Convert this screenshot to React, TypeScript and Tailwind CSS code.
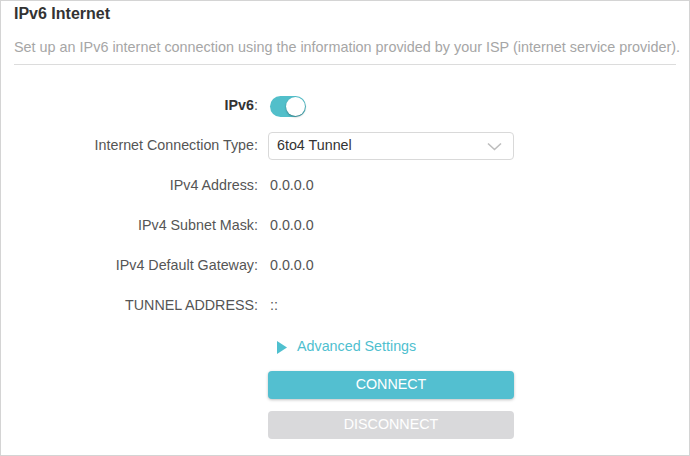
export default function App() {
  const rows = [
    { label: "IPv4 Address", value: "0.0.0.0" },
    { label: "IPv4 Subnet Mask", value: "0.0.0.0" },
    { label: "IPv4 Default Gateway", value: "0.0.0.0" },
    { label: "TUNNEL ADDRESS", value: "::" },
  ];

  return (
    <div
      className="w-[690px] h-[456px] bg-white border border-[#d4d4d4] text-[14.3px] text-[#555]"
      style={{ fontFamily: '"Liberation Sans", Arial, sans-serif' }}
    >
      <div className="mx-[13px] border-b border-[#dcdcdc] pb-[7px]">
        <h1 className="mt-[3px] leading-[20px] text-[16px] font-bold text-[#333]">IPv6 Internet</h1>
        <p className="mt-[14px] leading-[19px] text-[14.4px] text-[#a6a6a6] whitespace-nowrap">
          Set up an IPv6 internet connection using the information provided by your ISP (internet service provider).
        </p>
      </div>

      <div className="mt-[21px]">
        <div className="flex h-10 items-center">
          <div className="w-[257px] text-right">
            <span className="font-bold text-[#333]">IPv6</span>:
          </div>
          <div className="ml-[12px] relative w-[36px] h-[21px] rounded-full bg-[#52bfca]">
            <div className="absolute right-[1px] top-[1px] w-[19px] h-[19px] rounded-full bg-white shadow-[0_1px_2px_rgba(0,0,0,0.35)]" />
          </div>
        </div>

        <div className="flex h-10 items-center">
          <div className="w-[257px] text-right">Internet Connection Type:</div>
          <div className="ml-[10px] flex items-center justify-between w-[246px] h-[28px] rounded-[4px] border border-[#d9d9d9] pl-[8px] pr-[11px] text-[#333]">
            <span>6to4 Tunnel</span>
            <svg width="15" height="9" viewBox="0 0 15 9" fill="none">
              <path d="M1 1.5L7.5 7.5L14 1.5" stroke="#bdbdbd" strokeWidth="1.6" />
            </svg>
          </div>
        </div>

        {rows.map((r) => (
          <div key={r.label} className="flex h-10 items-center">
            <div className="w-[257px] text-right">{r.label}:</div>
            <div className="ml-[12px]">{r.value}</div>
          </div>
        ))}

        <div className="mt-[9px] ml-[276px] flex h-[24px] items-center gap-[10px] text-[#4fc0cf]">
          <svg width="10" height="13" viewBox="0 0 10 13">
            <path d="M0 0L10 6.5L0 13Z" fill="#4fc0cf" />
          </svg>
          <span>Advanced Settings</span>
        </div>

        <button className="mt-[12px] ml-[267px] block w-[246px] h-[28px] rounded-[4px] bg-[#53bfd0] text-white shadow-[0_1px_3px_rgba(0,0,0,0.25)]">
          CONNECT
        </button>
        <button className="mt-[12px] ml-[267px] block w-[246px] h-[28px] rounded-[4px] bg-[#d9d9db] text-white">
          DISCONNECT
        </button>
      </div>
    </div>
  );
}
